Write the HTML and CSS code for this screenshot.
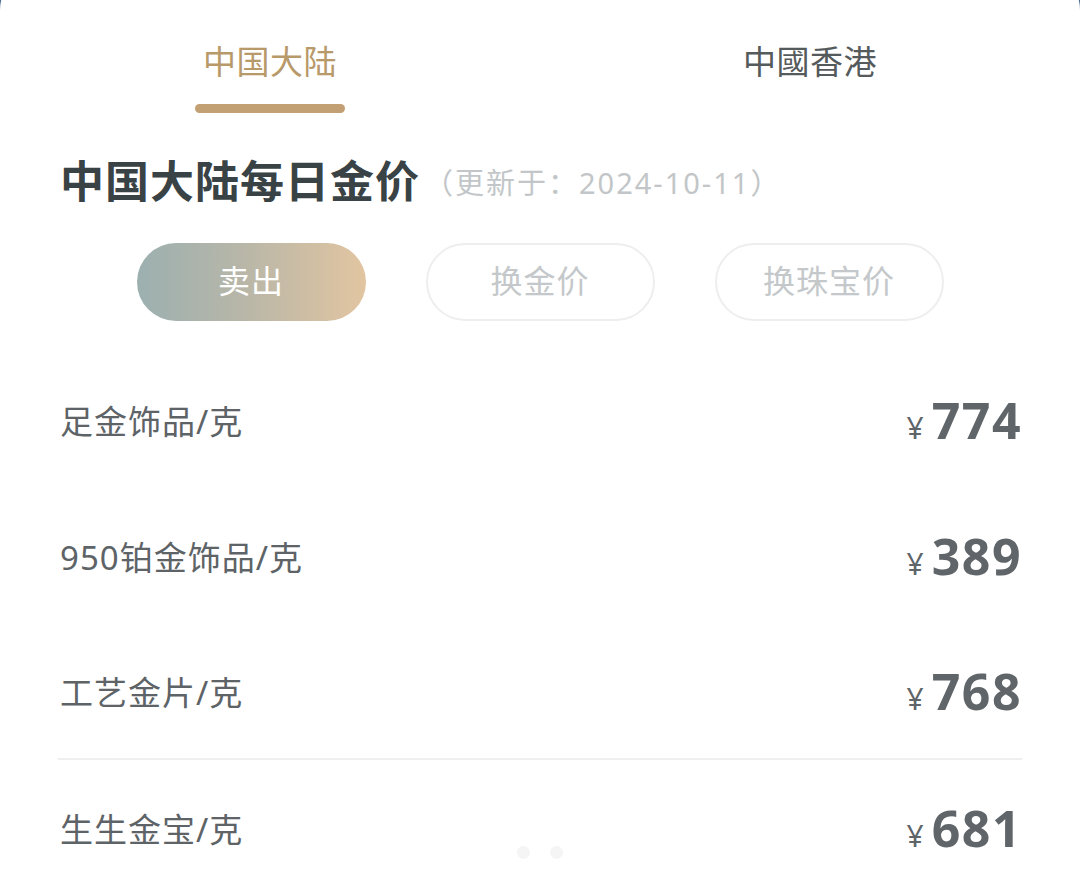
FILE: index.html
```html
<!DOCTYPE html>
<html>
<head>
  <meta name="viewport" content="width=device-width, initial-scale=1.0">
  <link rel="stylesheet" href="styles.css">
</head>
<body>
  <div class="sheet">
    <div class="tabs">
      <div class="tab active">
        <span class="tab-label">中国大陆</span>
        <span class="tab-line"></span>
      </div>
      <div class="tab">
        <span class="tab-label">中國香港</span>
        <span class="tab-line"></span>
      </div>
    </div>

    <div class="title-row">
      <h2 class="title">中国大陆每日金价</h2>
      <span class="updated">（更新于：2024-10-11）</span>
    </div>

    <div class="filters">
      <button class="pill selected">卖出</button>
      <button class="pill">换金价</button>
      <button class="pill">换珠宝价</button>
    </div>

    <div class="price-list">
      <div class="price-row">
        <span class="item-name">足金饰品/克</span>
        <span class="price"><span class="yen">¥</span>774</span>
      </div>
      <div class="price-row">
        <span class="item-name">950铂金饰品/克</span>
        <span class="price"><span class="yen">¥</span>389</span>
      </div>
      <div class="price-row group-end">
        <span class="item-name">工艺金片/克</span>
        <span class="price"><span class="yen">¥</span>768</span>
      </div>
      <div class="price-row">
        <span class="item-name">生生金宝/克</span>
        <span class="price"><span class="yen">¥</span>681</span>
      </div>
    </div>

    <div class="pager">
      <span class="dot"></span>
      <span class="dot"></span>
    </div>
  </div>
</body>
</html>
```

FILE: styles.css
```css
* {
  box-sizing: border-box;
}
html, body {
  height: 100%;
}
body {
  margin: 0;
  background: #4d6f98;
  font-family: "Noto Sans", "Noto Sans CJK SC", sans-serif;
  color: #5d6366;
  overflow: hidden;
}
.sheet {
  margin-top: -30px;
  padding-top: 30px;
  min-height: calc(100% + 30px);
  background: #fff;
  border-radius: 40px 40px 0 0;
  position: relative;
}
.tabs {
  display: flex;
  padding-top: 40px;
}
.tab {
  flex: 1;
  display: flex;
  flex-direction: column;
  align-items: center;
}
.tab-label {
  font-family: "Noto Sans CJK SC", sans-serif;
  font-size: 33px;
  line-height: 40px;
  color: #555a5c;
  letter-spacing: 0.5px;
}
.tab-line {
  width: 150px;
  height: 9px;
  margin-top: 24px;
  border-radius: 5px;
  background: transparent;
}
.tab.active .tab-label {
  color: #b8996a;
}
.tab.active .tab-line {
  background: #c3a074;
}
.title-row {
  display: flex;
  align-items: center;
  padding: 0 60px;
  margin-top: 36px;
  height: 60px;
}
.title {
  margin: 0;
  font-family: "Noto Sans CJK SC", sans-serif;
  font-size: 44px;
  font-weight: 700;
  letter-spacing: 1px;
  color: #394244;
  line-height: 60px;
}
.updated {
  font-family: "Noto Sans", "Noto Sans CJK SC", sans-serif;
  font-size: 29px;
  letter-spacing: 2px;
  color: #c2c6c8;
  margin-left: 4px;
  margin-top: 4px;
}
.filters {
  display: flex;
  justify-content: center;
  gap: 60px;
  margin-top: 34px;
}
.pill {
  width: 229px;
  height: 78px;
  border-radius: 39px;
  border: 2px solid #eeeeee;
  background: #fff;
  font-family: "Noto Sans CJK SC", sans-serif;
  font-size: 32px;
  letter-spacing: 1px;
  color: #c4c8ca;
  padding: 0 0 6px;
}
.pill.selected {
  border: none;
  color: #fff;
  background: linear-gradient(90deg, #9cb0b0 0%, #b7b6a8 45%, #e2c5a1 100%);
}
.price-list {
  margin-top: 31px;
  padding: 0 58px;
}
.price-row {
  display: flex;
  justify-content: space-between;
  align-items: center;
  height: 136px;
  padding: 0 2px;
}
.price-row.group-end {
  border-bottom: 2px solid #efefef;
}
.item-name {
  font-family: "Noto Sans", "Noto Sans CJK SC", sans-serif;
  font-size: 33px;
  letter-spacing: 1px;
  color: #5d6366;
}
.price {
  display: flex;
  align-items: baseline;
  font-family: "Noto Sans", sans-serif;
  font-size: 50px;
  font-weight: 700;
  color: #5f6568;
  letter-spacing: 1.5px;
  margin-right: -2px;
}
.yen {
  font-size: 30px;
  font-weight: 400;
  margin-right: 8px;
  letter-spacing: 0;
}
.pager {
  position: absolute;
  left: 0;
  right: 0;
  top: 876px;
  display: flex;
  justify-content: center;
  gap: 20px;
}
.dot {
  width: 13px;
  height: 13px;
  border-radius: 50%;
  background: #f5f5f5;
}
```
